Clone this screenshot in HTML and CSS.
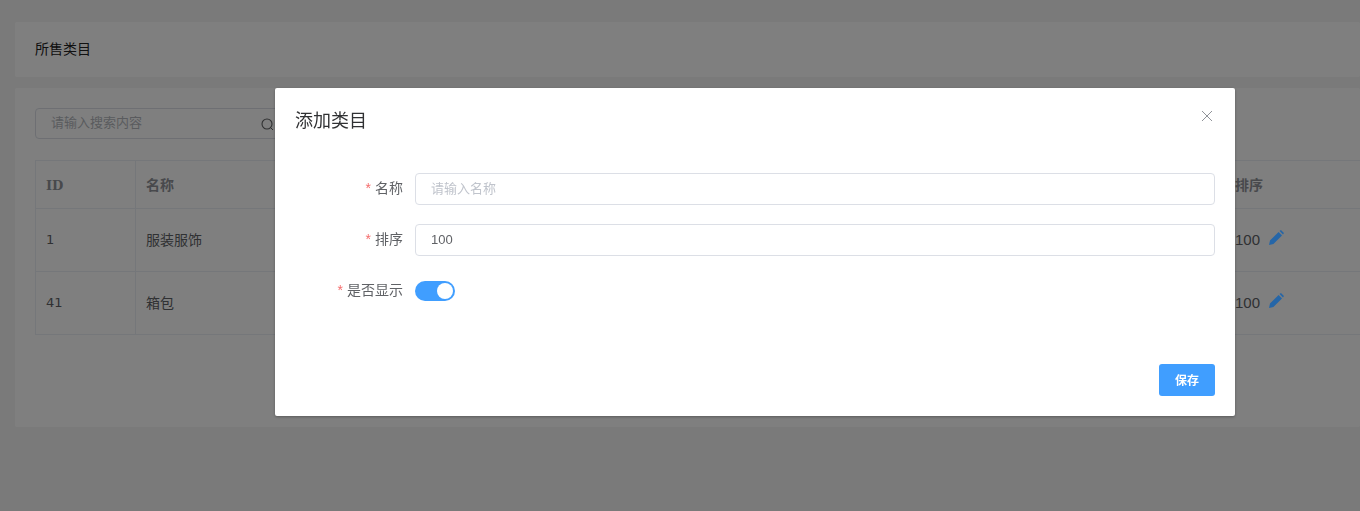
FILE: index.html
```html
<!DOCTYPE html>
<html lang="zh-CN">
<head>
    <meta charset="UTF-8">
    <meta name="viewport" content="width=device-width, initial-scale=1.0">
    <title>所售类目</title>
    <link rel="stylesheet" href="styles.css">
</head>
<body>
    <div class="page">
        <div class="card card-title">所售类目</div>
        <div class="card card-list">
            <div class="search">
                <span class="search-text">请输入搜索内容</span>
                <svg class="search-icon" width="14" height="14" viewBox="0 0 14 14">
                    <circle cx="6" cy="6" r="5" fill="none" stroke="#5f6062" stroke-width="1.1"/>
                    <path d="M9.7 9.7 L12 12" stroke="#5f6062" stroke-width="1"/>
                </svg>
            </div>
            <table class="list">
                <thead>
                    <tr><th class="col-id">ID</th><th class="col-name">名称</th><th class="col-fill"></th><th>排序</th></tr>
                </thead>
                <tbody>
                    <tr>
                        <td class="num">1</td><td>服装服饰</td><td></td>
                        <td>
                            <div class="sort-cell">100
                                <svg class="pencil" width="15" height="15" viewBox="0 0 15 15"><path d="M0 15 L1 10.6 L9.6 2 L13 5.4 L4.4 14 Z M10.6 1 L11.4 .3 Q11.8 0 12.2 .3 L14.7 2.8 Q15 3.2 14.7 3.6 L14 4.4 Z"/></svg>
                            </div>
                        </td>
                    </tr>
                    <tr>
                        <td class="num">41</td><td>箱包</td><td></td>
                        <td>
                            <div class="sort-cell">100
                                <svg class="pencil" width="15" height="15" viewBox="0 0 15 15"><path d="M0 15 L1 10.6 L9.6 2 L13 5.4 L4.4 14 Z M10.6 1 L11.4 .3 Q11.8 0 12.2 .3 L14.7 2.8 Q15 3.2 14.7 3.6 L14 4.4 Z"/></svg>
                            </div>
                        </td>
                    </tr>
                </tbody>
            </table>
        </div>
    </div>

    <div class="mask"></div>

    <div class="dialog">
        <div class="dialog-header">
            <span class="dialog-title">添加类目</span>
            <svg class="dialog-close" width="12" height="12" viewBox="0 0 12 12">
                <path d="M1 1 L11 11 M11 1 L1 11" stroke="#909399" stroke-width="1"/>
            </svg>
        </div>
        <div class="dialog-body">
            <div class="form-row">
                <label class="form-label"><span class="required">*</span>名称</label>
                <div class="input placeholder">请输入名称</div>
            </div>
            <div class="form-row">
                <label class="form-label"><span class="required">*</span>排序</label>
                <div class="input">100</div>
            </div>
            <div class="form-row">
                <label class="form-label"><span class="required">*</span>是否显示</label>
                <div class="switch"><span class="switch-dot"></span></div>
            </div>
        </div>
        <div class="dialog-footer">
            <button class="btn-save">保存</button>
        </div>
    </div>
</body>
</html>
```

FILE: styles.css
```css
* {
    box-sizing: border-box;
}

html,
body {
    height: 100%;
    margin: 0;
    overflow: hidden;
}

body {
    background-color: #f5f5f5;
    color: #333;
    font-family: "Liberation Sans", "Noto Sans CJK SC", sans-serif;
    font-size: 14px;
}

.page {
    padding: 22px 0 0 15px;
}

.card {
    background-color: #fff;
    border-radius: 2px;
}

.card-title {
    height: 55px;
    margin-bottom: 11px;
    padding-left: 20px;
    line-height: 55px;
    font-size: 14px;
    color: #222;
}

.card-list {
    height: 339px;
    padding: 20px 0 20px 20px;
}

.search {
    display: flex;
    align-items: center;
    justify-content: space-between;
    width: 251px;
    height: 31px;
    margin-bottom: 21px;
    padding: 0 10px 0 15px;
    border: 1px solid #dcdfe6;
    border-radius: 4px;
    font-size: 13px;
    line-height: 29px;
    color: #b4b7bd;
}

.search-text {
    margin-top: -3px;
    white-space: nowrap;
}

.search-icon {
    flex: none;
    margin-top: 3px;
}

.list {
    width: 100%;
    border-collapse: collapse;
    table-layout: fixed;
}

.list th,
.list td {
    padding: 0 10px;
    border: 1px solid #ebeef5;
    text-align: left;
    line-height: 18px;
}

.list th {
    height: 48px;
    font-weight: bold;
    color: #909399;
    font-size: 14px;
}

.list td {
    height: 63px;
    color: #606266;
    font-size: 14px;
}

.list .col-id {
    width: 100px;
    padding-top: 3px;
    font-family: "DejaVu Serif", serif;
    font-size: 13px;
}

.list .num {
    font-family: "DejaVu Sans", sans-serif;
    font-size: 13px;
}

.col-name {
    width: 300px;
}

.col-fill {
    width: 789px;
}

.list td:last-child,
.list th:last-child {
    border-right: 0;
}

.sort-cell {
    display: flex;
    align-items: center;
    gap: 9px;
    font-size: 15px;
}

.pencil {
    position: relative;
    z-index: 1;
    margin-top: -5px;
    fill: #2566a8;
}

.mask {
    position: fixed;
    inset: 0;
    background-color: rgba(0, 0, 0, .5);
}

.dialog {
    position: fixed;
    z-index: 2;
    top: 88px;
    left: 275px;
    width: 960px;
    height: 328px;
    padding: 20px;
    background-color: #fff;
    border-radius: 2px;
    box-shadow: 0 1px 3px rgba(0, 0, 0, .3);
}

.dialog-header {
    display: flex;
    justify-content: space-between;
    height: 65px;
}

.dialog-title {
    font-size: 18px;
    line-height: 26px;
    color: #303133;
}

.dialog-close {
    margin-top: 2px;
    margin-right: 2px;
}

.form-row {
    display: flex;
    align-items: center;
    height: 32px;
    margin-bottom: 19px;
}

.form-label {
    width: 108px;
    margin-top: -5px;
    text-align: right;
    font-size: 14px;
    color: #606266;
}

.required {
    margin-right: 4px;
    color: #f56c6c;
}

.input {
    flex: 1;
    height: 32px;
    margin-left: 12px;
    padding: 0 15px;
    border: 1px solid #dcdfe6;
    border-radius: 4px;
    line-height: 29px;
    font-size: 13px;
    color: #606266;
}

.placeholder {
    color: #c0c4cc;
}

.switch {
    position: relative;
    width: 40px;
    height: 20px;
    margin-left: 12px;
    background-color: #409eff;
    border-radius: 10px;
}

.switch-dot {
    position: absolute;
    top: 2px;
    right: 2px;
    width: 16px;
    height: 16px;
    background-color: #fff;
    border-radius: 50%;
}

.dialog-footer {
    display: flex;
    justify-content: flex-end;
    margin-top: 57px;
}

.btn-save {
    width: 56px;
    height: 32px;
    padding: 0 0 2px;
    border: 0;
    border-radius: 3px;
    background-color: #409eff;
    color: #fff;
    font-family: inherit;
    font-size: 12px;
    font-weight: bold;
}
```
